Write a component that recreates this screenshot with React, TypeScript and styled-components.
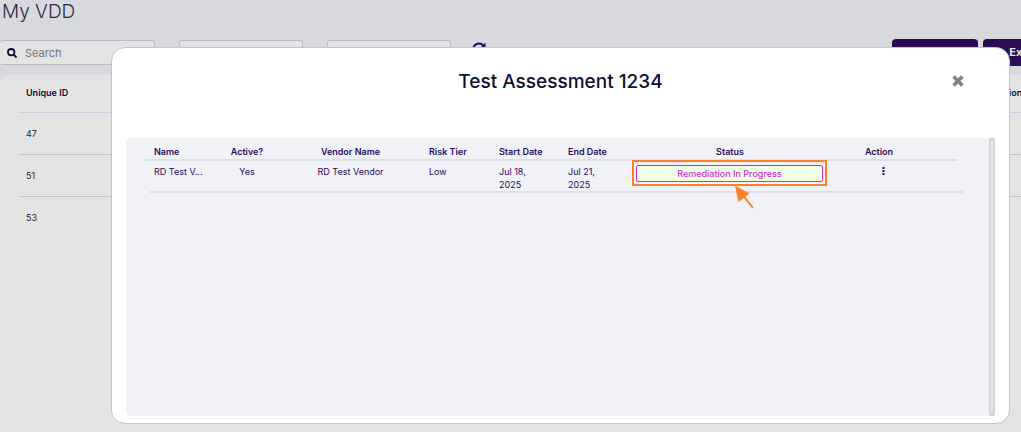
import React from "react";
import styled, { createGlobalStyle } from "styled-components";

const GlobalStyle = createGlobalStyle`
  *, *::before, *::after { box-sizing: border-box; }
  body {
    margin: 0;
    background: #d8d9df;
    font-family: Inter, "Liberation Sans", sans-serif;
    font-size: 9px;
    color: #120c35;
  }
  button, input, select { font: inherit; color: inherit; }
`;

const Viewport = styled.div`
  height: 100vh;
  overflow: hidden;
`;

const Page = styled.main`
  display: flex;
  flex-direction: column;
  width: calc(100% + 50px);
  height: 100%;
`;

const PageTitle = styled.h1`
  margin: 0;
  padding: 0 2px;
  font-size: 19px;
  line-height: 24px;
  font-weight: 300;
  color: #2e2a4a;
`;

const Toolbar = styled.div`
  display: flex;
  align-items: center;
  gap: 24px;
  margin-top: 15px;
`;

const SearchBox = styled.label`
  display: flex;
  align-items: center;
  gap: 8px;
  width: 155px;
  height: 25px;
  padding: 0 7px;
  border: 1px solid #b9bac2;
  border-left: 0;
  border-radius: 3px;
  background: #e4e4e4;
`;

const SearchInput = styled.input`
  flex: 1;
  min-width: 0;
  padding: 0;
  border: 0;
  outline: 0;
  background: transparent;
  font-size: 11px;
  line-height: 14px;
  &::placeholder { color: #6f7378; opacity: 1; }
`;

const Filter = styled.select`
  width: 124px;
  height: 25px;
  border: 1px solid #b9bac2;
  border-radius: 3px;
  background: #e4e4e4;
  appearance: none;
`;

const IconButton = styled.button`
  display: inline-flex;
  align-items: center;
  justify-content: center;
  padding: 0;
  border: 0;
  background: transparent;
  cursor: pointer;
`;

const Refresh = styled(IconButton)`
  align-self: flex-start;
  width: 16px;
  height: 20px;
  margin-left: -4px;
  color: #2b0d55;
`;

const Actions = styled.div`
  display: flex;
  gap: 5px;
  margin-left: auto;
`;

const PrimaryButton = styled.button<{ $width: number }>`
  width: ${(p) => p.$width}px;
  height: 27px;
  padding: 0 0 2px;
  border: 0;
  border-radius: 4px;
  background: #2b0d55;
  color: #e4e4e4;
  font-size: 11px;
  font-weight: 700;
`;

const Card = styled.section`
  flex: 1;
  margin-top: 9px;
  padding-left: 19px;
  border-radius: 10px 10px 0 0;
  background: #e4e4e4;
`;

const ListTable = styled.table`
  width: 100%;
  border-collapse: separate;
  border-spacing: 0;
  th, td {
    height: 42px;
    padding: 0 7px;
    border-bottom: 1px solid #c4c4c6;
    text-align: left;
    font-weight: 400;
    color: #24223a;
  }
  th {
    height: 38px;
    padding-bottom: 2px;
    border-color: #cfcde2;
    font-weight: 600;
    color: #120c35;
  }
  th:last-child { width: 84px; }
  tbody tr:last-child td { border-color: transparent; }
`;

const Overlay = styled.div`
  position: fixed;
  inset: 0;
  display: flex;
  padding: 47px 11px 8px 111px;
`;

const Modal = styled.div`
  flex: 1;
  min-width: 0;
  display: flex;
  flex-direction: column;
  padding: 0 14px 7px;
  border: 1px solid #c6c6ca;
  border-radius: 14px;
  background: #fff;
`;

const ModalHeader = styled.header`
  display: grid;
  grid-template-columns: 60px 1fr 60px;
  align-items: center;
  height: 66px;
  margin-bottom: 24px;
`;

const ModalTitle = styled.h2`
  grid-column: 2;
  margin: 0;
  padding-top: 2px;
  text-align: center;
  font-size: 19px;
  line-height: 24px;
  font-weight: 500;
  color: #0f1030;
`;

const CloseButton = styled(IconButton)`
  justify-self: center;
  width: 16px;
  height: 16px;
  margin-right: 14px;
  color: #808080;
`;

const Panel = styled.div`
  flex: 1;
  display: flex;
  border-radius: 5px;
  background: #f1f2f8;
`;

const PanelBody = styled.div`
  flex: 1;
  min-width: 0;
  padding: 0 26px 0 18px;
`;

const ScrollTrack = styled.div`
  width: 6px;
  border-radius: 4px;
  background: #e3e3e8;
  box-shadow: inset 0 0 3px #aeaeb4;
`;

const Assessments = styled.table`
  display: block;
  color: #2a0d5c;
  line-height: 13px;
  thead, tbody { display: block; }
  thead { margin-right: 6px; }
  tbody { margin-left: 6px; }
`;

const Row = styled.tr<{ $name: number; $end: number }>`
  display: grid;
  grid-template-columns:
    minmax(0, ${(p) => p.$name}fr) minmax(0, 80fr) minmax(0, 127fr)
    minmax(0, 70fr) minmax(0, 69fr) minmax(0, 74fr) minmax(0, 206fr)
    minmax(0, 92fr) minmax(0, ${(p) => p.$end}fr);
  border-bottom: 2px solid #dedfe6;
`;

const HeadRow = styled(Row)`
  padding-top: 7px;
  line-height: 14px;
`;

const BodyRow = styled(Row)`
  padding-top: 4px;
`;

type Align = { $center?: boolean; $pad?: number };

const Th = styled.th<Align>`
  padding: 0 0 0 ${(p) => p.$pad ?? 0}px;
  text-align: ${(p) => (p.$center ? "center" : "left")};
  font-weight: 600;
  white-space: nowrap;
`;

const Td = styled.td<Align>`
  padding: 0 ${(p) => (p.$center ? 0 : 20)}px 0 ${(p) => p.$pad ?? 0}px;
  text-align: ${(p) => (p.$center ? "center" : "left")};
`;

const NameTd = styled(Td)`
  padding-right: 0;
  white-space: nowrap;
`;

const StatusTd = styled(Td)`
  padding: 0 10px 0 9px;
`;

const Highlight = styled.div`
  position: relative;
  &::after {
    content: "";
    position: absolute;
    inset: -5px -4px -4px;
    border: 2px solid #ff7f27;
    pointer-events: none;
  }
`;

const StatusButton = styled.button`
  display: block;
  width: 100%;
  height: 17px;
  padding: 0 0 1px;
  border: 1px solid #cc2fd0;
  border-radius: 2px;
  background: #f0ffe6;
  color: #cc2fd0;
  font-weight: 500;
  line-height: 13px;
`;

const Arrow = styled.svg`
  position: absolute;
  top: 20px;
  left: 50%;
`;

const MenuTd = styled(Td)`
  padding-left: 8px;
`;

const cols = ["Name", "Active?", "Vendor Name", "Risk Tier", "Start Date", "End Date", "Status", "Action"];
const centered = new Set(["Active?", "Vendor Name", "Status", "Action"]);

export default function App() {
  return (
    <Viewport>
      <GlobalStyle />
      <Page>
        <PageTitle>My VDD</PageTitle>
        <Toolbar>
          <SearchBox>
            <svg width="10" height="10" viewBox="0 0 10 10" fill="none" stroke="#120c35" strokeWidth="1.8" aria-hidden="true">
              <circle cx="4.2" cy="4.2" r="3.2" />
              <path d="M6.6 6.6 9.5 9.5" strokeWidth="2" />
            </svg>
            <SearchInput type="search" placeholder="Search" aria-label="Search" />
          </SearchBox>
          <Filter aria-label="First filter" />
          <Filter aria-label="Second filter" />
          <Refresh aria-label="Refresh">
            <svg width="14" height="14" viewBox="0 0 14 14" fill="none" stroke="currentColor" strokeWidth="2" aria-hidden="true">
              <path d="M1.4 6A5.6 5.2 0 0 1 11.4 3.6M12.6 8A5.6 5.2 0 0 1 2.6 10.4" />
              <path d="M13.5 0.5V5.5H8.5ZM0.5 13.5V8.5H5.5Z" fill="currentColor" stroke="none" />
            </svg>
          </Refresh>
          <Actions>
            <PrimaryButton $width={86}>Add</PrimaryButton>
            <PrimaryButton $width={88}>Export</PrimaryButton>
          </Actions>
        </Toolbar>
        <Card>
          <ListTable>
            <thead>
              <tr><th>Unique ID</th><th>Action</th></tr>
            </thead>
            <tbody>
              {[47, 51, 53].map((id) => (
                <tr key={id}><td>{id}</td><td /></tr>
              ))}
            </tbody>
          </ListTable>
        </Card>
      </Page>

      <Overlay>
        <Modal role="dialog" aria-labelledby="assessment-title">
          <ModalHeader>
            <ModalTitle id="assessment-title">Test Assessment 1234</ModalTitle>
            <CloseButton aria-label="Close">
              <svg width="12" height="12" viewBox="0 0 12 12" fill="none" stroke="currentColor" strokeWidth="3.6" aria-hidden="true">
                <path d="M1.6 1.6 10.4 10.4M10.4 1.6 1.6 10.4" />
              </svg>
            </CloseButton>
          </ModalHeader>
          <Panel>
            <PanelBody>
              <Assessments>
                <thead>
                  <HeadRow $name={63} $end={32}>
                    {cols.map((c) => (
                      <Th key={c} $center={centered.has(c)} $pad={centered.has(c) ? 0 : c === "Name" ? 10 : 15}>{c}</Th>
                    ))}
                  </HeadRow>
                </thead>
                <tbody>
                  <BodyRow $name={57} $end={38}>
                    <NameTd $pad={4}>RD Test V...</NameTd>
                    <Td $center>Yes</Td>
                    <Td $center>RD Test Vendor</Td>
                    <Td $pad={15}>Low</Td>
                    <Td $pad={15}>Jul 18, 2025</Td>
                    <Td $pad={15}>Jul 21, 2025</Td>
                    <StatusTd>
                      <Highlight>
                        <StatusButton>Remediation In Progress</StatusButton>
                        <Arrow width="26" height="26" viewBox="-6 0 26 26" aria-hidden="true">
                          <path d="M5 8 17 23" stroke="#ff7f27" strokeWidth="2" />
                          <path d="M-1 0.5 13.5 8.5 2.5 17Z" fill="#ff7f27" />
                        </Arrow>
                      </Highlight>
                    </StatusTd>
                    <MenuTd $center $pad={8}>
                      <IconButton aria-label="Row actions">
                        <svg width="3" height="9" viewBox="0 0 3 9" fill="#2a0d5c" aria-hidden="true">
                          <path d="M0.5 1h2v2h-2zM0.5 4h2v2h-2zM0.5 7h2v2h-2z" />
                        </svg>
                      </IconButton>
                    </MenuTd>
                  </BodyRow>
                </tbody>
              </Assessments>
            </PanelBody>
            <ScrollTrack />
          </Panel>
        </Modal>
      </Overlay>
    </Viewport>
  );
}
